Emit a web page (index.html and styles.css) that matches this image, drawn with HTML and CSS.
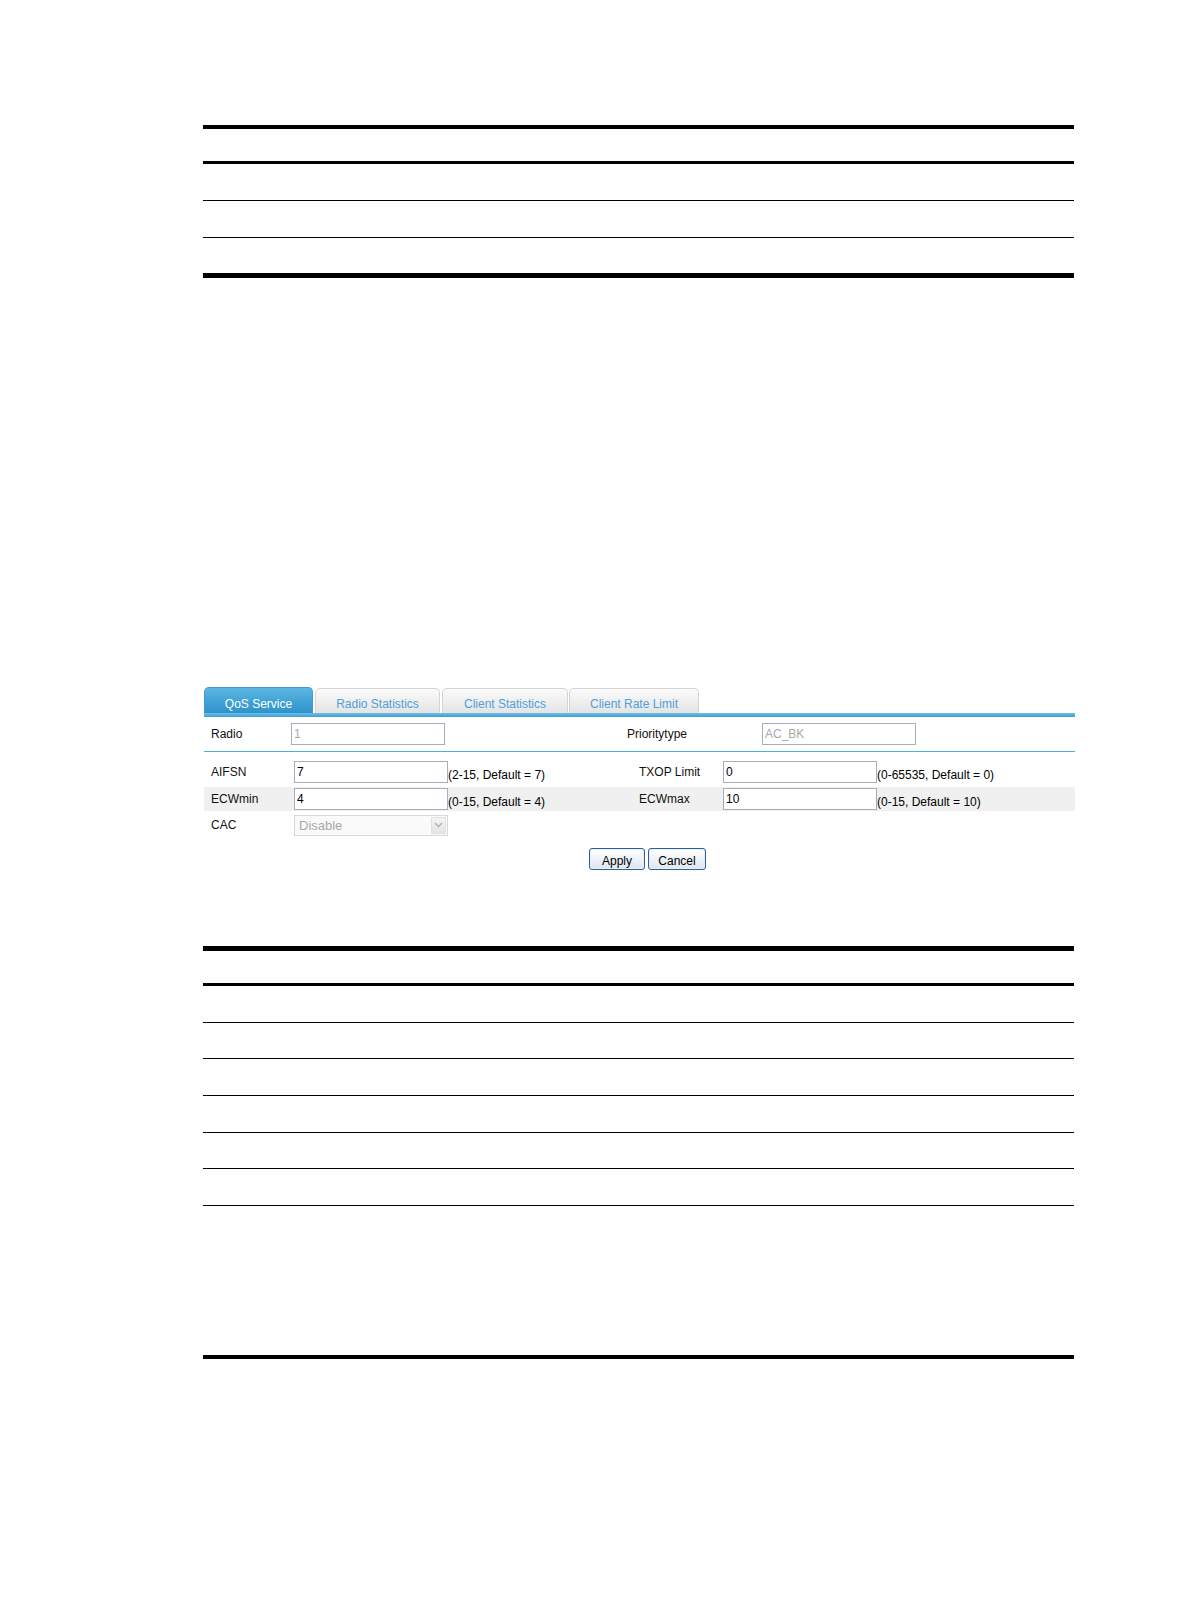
FILE: index.html
```html
<!DOCTYPE html>
<html>
<head>
<meta charset="utf-8">
<link rel="stylesheet" href="styles.css">
</head>
<body>
<div class="page">
  <div class="doc-table t1">
    <div class="row head"></div>
    <div class="row r36"></div>
    <div class="row r36 thin"></div>
    <div class="row r35 thin"></div>
  </div>

  <div class="ui">
    <div class="tabs">
      <div class="tab active w1">QoS Service</div>
      <div class="tab w2">Radio Statistics</div>
      <div class="tab w3">Client Statistics</div>
      <div class="tab w4">Client Rate Limit</div>
    </div>
    <div class="tab-line"></div>
    <div class="radio-row">
      <div class="lbl lbl-radio">Radio</div>
      <div class="field disabled">1</div>
      <div class="spacer"></div>
      <div class="lbl lbl-prio">Prioritytype</div>
      <div class="field disabled">AC_BK</div>
    </div>
    <div class="sep"></div>
    <div class="form">
      <div class="frow first">
        <div class="lbl c1">AIFSN</div>
        <div class="field">7</div>
        <div class="hint c3">(2-15, Default = 7)</div>
        <div class="lbl c4">TXOP Limit</div>
        <div class="field">0</div>
        <div class="hint">(0-65535, Default = 0)</div>
      </div>
      <div class="frow alt">
        <div class="lbl c1">ECWmin</div>
        <div class="field">4</div>
        <div class="hint c3">(0-15, Default = 4)</div>
        <div class="lbl c4">ECWmax</div>
        <div class="field">10</div>
        <div class="hint">(0-15, Default = 10)</div>
      </div>
      <div class="frow last">
        <div class="lbl c1">CAC</div>
        <div class="select">
          <span class="sel-text">Disable</span>
          <span class="sel-btn"><svg width="9" height="6" viewBox="0 0 9 6"><path d="M1 1 L4.5 4.5 L8 1" fill="none" stroke="#b8b8b8" stroke-width="1.6"/></svg></span>
        </div>
      </div>
    </div>
    <div class="buttons">
      <button class="btn apply">Apply</button>
      <button class="btn cancel">Cancel</button>
    </div>
  </div>

  <div class="doc-table t2">
    <div class="row head"></div>
    <div class="row r36"></div>
    <div class="row r35 thin"></div>
    <div class="row r36 thin"></div>
    <div class="row r36 thin"></div>
    <div class="row r35 thin"></div>
    <div class="row r36 thin"></div>
    <div class="row big thin"></div>
  </div>
</div>
</body>
</html>
```

FILE: styles.css
```css
html, body {
  margin: 0;
  padding: 0;
  background: #fff;
}
body {
  font-family: "Liberation Sans", Arial, sans-serif;
  font-size: 12px;
  color: #000;
}
.page {
  padding-top: 125px;
  padding-left: 203px;
  width: 872px;
}

/* document tables (empty rules) */
.doc-table {
  width: 871px;
}
.doc-table.t1 {
  border-top: 4px solid #000;
  border-bottom: 5px solid #000;
}
.doc-table.t2 {
  margin-top: 76px;
  border-top: 5px solid #000;
  border-bottom: 4px solid #000;
}
.doc-table .row.head {
  height: 32px;
  border-bottom: 3px solid #000;
}
.doc-table .row.r36 { height: 36px; }
.doc-table .row.r35 { height: 35px; }
.doc-table .row.big { height: 149px; }
.doc-table .row.thin { border-top: 1px solid #000; }

/* UI screenshot */
.ui {
  margin-top: 409px;
  margin-left: 1px;
  width: 871px;
}
.tabs {
  display: flex;
  align-items: flex-end;
  gap: 1px;
  height: 26px;
}
.tab {
  height: 25px;
  box-sizing: border-box;
  border: 1px solid #d4d4d4;
  border-bottom: none;
  border-radius: 5px 5px 0 0;
  background: linear-gradient(#fbfbfb, #e4e4e4);
  color: #4f9fd8;
  text-align: center;
  line-height: 18px;
  padding-top: 6px;
}
.tab.active {
  height: 26px;
  padding-top: 7px;
  border: 1px solid #3d9bd0;
  border-bottom: none;
  background: linear-gradient(#5cb6e2, #2d92cc);
  color: #fff;
}
.w1 { width: 109px; }
.w2 { width: 125px; margin-left: 1px; }
.w3 { width: 126px; margin-left: 1px; }
.w4 { width: 130px; }
.tab-line {
  height: 4px;
  background: linear-gradient(#6fbfe6, #3a9ed4);
}
.radio-row {
  display: flex;
  align-items: center;
  height: 34px;
}
.lbl {
  box-sizing: border-box;
  padding-left: 7px;
  color: #111;
}
.lbl-radio { width: 87px; }
.lbl-prio { width: 142px; }
.spacer { width: 175px; }
.field {
  box-sizing: border-box;
  width: 154px;
  height: 22px;
  border: 1px solid #a6adbb;
  background: #fff;
  padding-left: 2px;
  line-height: 20px;
  font-size: 12px;
  color: #000;
}
.field.disabled {
  color: #a8a8a8;
}
.sep {
  height: 1px;
  background: #47b2dc;
}
.form {
  padding-top: 7px;
}
.frow {
  display: flex;
  align-items: center;
  height: 24px;
}
.frow.first {
  height: 28px;
  align-items: flex-start;
  padding-top: 2px;
  box-sizing: border-box;
}
.frow.last {
  height: 28px;
}
.frow.alt {
  background: #f0f0f0;
}
.c1 { width: 90px; }
.c3 { width: 184px; }
.c4 { width: 91px; }
.hint {
  padding-top: 5px;
  box-sizing: border-box;
}
.frow.first .lbl {
  line-height: 22px;
}
.frow.first .hint {
  padding-top: 0;
  line-height: 22px;
  margin-top: 3px;
}
.select {
  box-sizing: border-box;
  width: 154px;
  height: 21px;
  border: 1px solid #d8d8d8;
  background: #fafafa;
  display: flex;
  align-items: center;
  justify-content: space-between;
}
.sel-text {
  color: #a8a8a8;
  padding-left: 4px;
  font-size: 13px;
}
.sel-btn {
  width: 15px;
  height: 17px;
  margin-right: 1px;
  background: linear-gradient(#f4f4f4, #e4e4e4);
  border: 1px solid #e0e0e0;
  display: flex;
  align-items: center;
  justify-content: center;
  box-sizing: border-box;
}
.buttons {
  display: flex;
  gap: 3px;
  padding-left: 385px;
  padding-top: 9px;
}
.btn {
  height: 22px;
  box-sizing: border-box;
  border: 1px solid #2f5f9c;
  border-radius: 3px;
  background: linear-gradient(#ffffff, #dfe6ef);
  font-family: "Liberation Sans", Arial, sans-serif;
  font-size: 12px;
  color: #000;
  padding: 3px 0 0 0;
  box-shadow: inset 0 0 0 1px #e8eef6;
}
.apply { width: 56px; }
.cancel { width: 58px; }
```
